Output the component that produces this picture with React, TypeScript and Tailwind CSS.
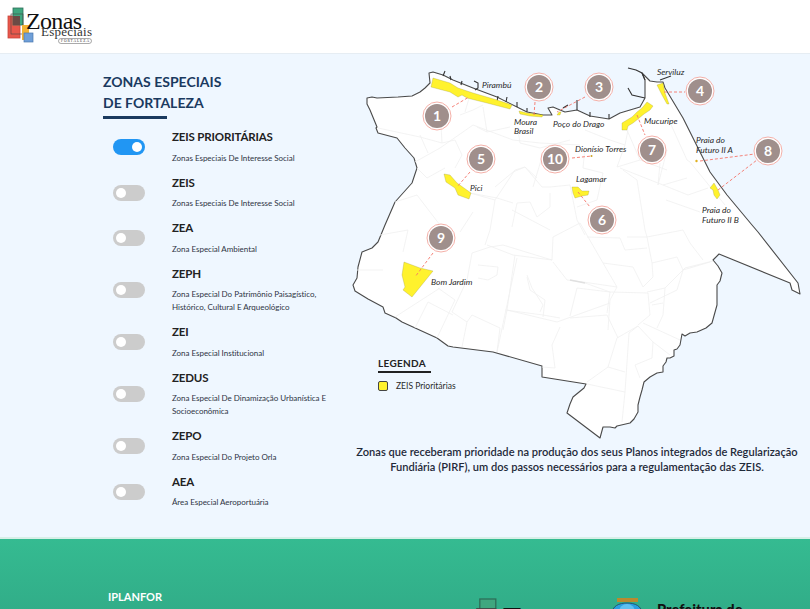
import React from "react";

const zones = [
  { t: "ZEIS PRIORITÁRIAS", d: ["Zonas Especiais De Interesse Social"], on: true },
  { t: "ZEIS", d: ["Zonas Especiais De Interesse Social"] },
  { t: "ZEA", d: ["Zona Especial Ambiental"] },
  { t: "ZEPH", d: ["Zona Especial Do Patrimônio Paisagístico,", "Histórico, Cultural E Arqueológico"] },
  { t: "ZEI", d: ["Zona Especial Institucional"] },
  { t: "ZEDUS", d: ["Zona Especial De Dinamização Urbanística E", "Socioeconômica"] },
  { t: "ZEPO", d: ["Zona Especial Do Projeto Orla"] },
  { t: "AEA", d: ["Área Especial Aeroportuária"] },
];

const outline =
  "367,98 372,97 377,98 398,97 412,96 420,92 425,88 430,83 429,73 433,72 443,75 453,80 473,88 497,97 517,107 527,112 543,115 552,115 548,108 553,107 560,110 565,112 577,110 590,116 609,119 620,113 640,107 645,98 645,80 642,73 650,81 657,82 663,82 665,88 683,118 710,172 727,195 752,225 758,232 798,283 800,294 792,290 790,283 719,254 713,260 718,266 722,273 720,281 717,285 717,305 712,323 706,328 697,332 690,333 685,336 682,334 680,345 677,349 674,350 674,356 670,358 667,358 666,362 663,366 663,372 657,373 650,377 644,382 642,390 640,397 638,405 638,412 634,419 630,423 617,426 615,428 610,427 603,427 600,438 567,413 570,404 573,397 584,388 586,384 542,377 542,366 493,352 453,347 448,346 437,338 402,322 396,318 385,313 383,307 368,299 355,291 353,285 357,278 358,267 362,252 372,248 378,242 385,225 395,202 412,183 417,168 414,158 405,148 397,138 378,133 376,128 377,127 370,110 367,104";

const jetties = [
  "474,81 478,83 478,88 475,90",
  "445,71 443,76",
  "450,76 451,80",
  "462,81 461,85",
  "498,96 497,101",
  "507,97 506,102",
  "517,102 517,107",
  "527,108 527,112",
  "577,100 577,110",
  "590,112 590,117",
  "609,114 609,119",
  "628,68 636,70 642,73 645,80",
  "628,88 632,95 645,98",
  "660,80 671,76",
  "563,108 568,105",
];

const districts = [
  "487,245 513,255 552,260", "552,260 553,237 580,223", "580,223 603,263 617,287",
  "553,262 567,280 583,282 617,287", "515,255 507,310 503,330", "507,310 557,322 610,303",
  "527,277 530,290 545,300 543,317", "603,263 633,267 643,287", "617,287 610,300 608,330",
  "647,237 652,263 653,277 643,287", "647,237 683,230 690,243 703,260", "652,263 677,257 683,270 710,262",
  "683,270 677,290 650,303", "627,237 647,237 645,230 637,180 623,170", "587,237 620,238 625,250 647,248",
  "570,185 577,220 585,235", "495,200 490,230 485,245", "515,170 495,200 470,193",
  "515,170 525,167 542,187 550,187 570,185", "550,193 550,207 537,217 530,202 517,203 512,227",
  "512,210 550,230", "542,157 533,187", "518,130 520,143 540,148 570,140", "617,167 640,160 667,170",
  "640,160 627,130", "658,185 667,150", "603,173 597,200 577,207", "378,128 420,137 442,143 455,140",
  "415,162 440,148 473,125 513,140", "420,135 428,153", "440,108 442,143", "455,140 462,155 455,168",
  "460,115 473,110 483,105", "477,127 487,132 510,127", "483,107 487,132", "513,140 540,143 580,145",
  "495,187 513,172 525,167 537,178", "470,193 497,198 513,203", "395,202 417,195 430,212 440,225",
  "417,168 427,178 445,168", "473,212 460,232", "380,235 408,230 403,252", "357,270 383,270",
  "395,317 440,288", "438,288 455,300 437,338", "428,302 453,315", "415,328 428,302",
  "472,253 467,280 452,312 467,322 462,347", "467,322 472,315 500,328 497,352",
  "472,253 490,247 503,245 552,260", "517,258 497,352", "505,310 543,315 560,318",
  "560,327 552,345 555,368 542,367", "478,265 498,267 497,275 488,280 478,278",
  "527,275 532,288 543,305 540,312", "587,384 625,392 622,422", "625,392 629,333 638,326",
  "638,326 617,338 608,367 587,382", "608,367 625,372", "638,326 653,342 670,355", "643,323 680,340",
  "653,342 652,358 635,365 640,378", "570,318 607,315 618,338", "610,292 607,313",
  "610,292 648,293 650,315 638,325", "585,283 610,292 577,288 570,316", "665,288 663,315 657,328",
  "652,305 663,303", "647,292 665,288 685,268 713,261", "668,118 687,160", "687,160 690,162 725,205",
  "620,168 663,185 687,178", "660,163 658,185", "585,130 610,140 625,145 628,130", "625,145 617,167",
  "663,185 688,195 708,188", "666,200 700,212", "470,95 465,112", "585,147 583,168 603,173",
];

const yellow = [
  "433,78 450,83 458,88 473,93 497,100 512,105 510,109 487,103 467,98 462,95 458,97 450,92 431,87",
  "519,111 527,113 543,115 542,117 530,116 520,114",
  "559,112 561,112 560,115 557,115",
  "444,174 450,175 457,183 471,193 469,199 458,195 455,188 446,182",
  "572,187 578,187 582,191 589,191 588,195 582,196 575,198 573,193",
  "622,130 622,123 632,117 637,112 642,108 647,102 653,106 650,110 644,114 638,119 633,123 628,126 627,130",
  "657,85 663,83 665,93 669,104 667,104 662,95",
  "710,188 714,183 718,190 720,195 717,199 714,195 713,190",
  "404,262 412,265 420,268 433,271 412,297 403,290 405,287 402,275",
];

const circles: [number, number, string][] = [
  [437, 116, "1"], [539, 87, "2"], [599, 87, "3"], [700, 91, "4"], [481, 159, "5"],
  [602, 220, "6"], [652, 150, "7"], [768, 151, "8"], [441, 238, "9"], [555, 159, "10"],
];

const connectors = [
  "452,107 469,97", "535,102 534,115", "585,97 570,105 557,112", "664,92 685,92", "470,172 457,187",
  "578,192 590,207", "637,115 645,135", "700,161 755,154", "718,190 757,160", "433,253 415,277", "572,158 592,156",
];

const labels: [number, number, string][] = [
  [482, 88, "Pirambú"], [514, 125, "Moura"], [514, 134, "Brasil"], [553, 127, "Poço do Drago"],
  [657, 75, "Serviluz"], [644, 124, "Mucuripe"], [696, 143, "Praia do"], [696, 153, "Futuro II A"],
  [702, 213, "Praia do"], [702, 223, "Futuro II B"], [575, 152, "Dionísio Torres"], [576, 182, "Lagamar"],
  [470, 191, "Pici"], [431, 285, "Bom Jardim"],
];

function Logo({ className }: { className: string }) {
  return (
    <svg viewBox="0 0 95 46" className={className}>
      <rect x="8" y="16" width="12" height="22" fill="#e8574b" stroke="#c9453a" strokeWidth="0.8" />
      <rect x="13" y="8" width="10" height="17" fill="#3fa77f" stroke="#2d6e58" strokeWidth="0.8" />
      <rect x="13" y="16" width="7" height="9" fill="#6b4a45" />
      <rect x="11" y="14" width="12" height="20" fill="none" stroke="#444" strokeWidth="0.6" />
      <rect x="22" y="25" width="7" height="15" fill="#f2b233" />
      <rect x="24" y="33" width="9" height="9" fill="#6f9fd8" stroke="#4a78b0" strokeWidth="0.7" />
      <text x="26" y="29" fontFamily="'Liberation Serif', serif" fontSize="24" fill="#111" textLength="56">Zonas</text>
      <text x="41" y="36" fontFamily="'Liberation Serif', serif" fontSize="13" fill="#333" textLength="51">Especiais</text>
      <rect x="58.5" y="38.5" width="33" height="5" rx="2.5" fill="#fff" stroke="#555" strokeWidth="0.5" />
      <text x="61" y="42.4" fontFamily="'Liberation Serif', serif" fontSize="3.6" fill="#333" textLength="28">FORTALEZA</text>
    </svg>
  );
}

function Toggle({ on }: { on?: boolean }) {
  return (
    <div className={`mt-[3px] flex h-4 w-8 shrink-0 items-center rounded-full px-[3px] ${on ? "justify-end bg-[#2196f3]" : "justify-start bg-[#cccccc]"}`}>
      <div className="h-[10px] w-[10px] rounded-full bg-white" />
    </div>
  );
}

function MapArt() {
  return (
    <svg viewBox="345 54 465 386" className="block h-[386px] w-[465px]">
      <polygon points={outline} fill="#ffffff" stroke="#4a4a4a" strokeWidth="1.1" strokeLinejoin="round" />
      {districts.map((p, i) => (
        <polyline key={i} points={p} fill="none" stroke="#f0f0f0" strokeWidth="0.8" />
      ))}
      <polyline points="570,280 585,283" fill="none" stroke="#e0e0e0" strokeWidth="1.5" />
      {jetties.map((p, i) => (
        <polyline key={i} points={p} fill="none" stroke="#333333" strokeWidth="1.1" />
      ))}
      {yellow.map((p, i) => (
        <polygon key={i} points={p} fill="#fff22d" stroke="#9a9440" strokeWidth="0.3" />
      ))}
      <circle cx="696.5" cy="161" r="1.2" fill="#e0b020" />
      <circle cx="591.5" cy="156" r="1" fill="#c9a020" />
      {connectors.map((p, i) => (
        <polyline key={i} points={p} fill="none" stroke="#f4756a" strokeWidth="0.9" strokeDasharray="3 2" />
      ))}
      {labels.map(([x, y, t], i) => (
        <text key={i} x={x} y={y} fontFamily="Lato, sans-serif" fontStyle="italic" fontSize="8.5" fill="#2a2a2a">{t}</text>
      ))}
      {circles.map(([x, y, t]) => (
        <g key={t}>
          <circle cx={x} cy={y} r="14" fill="#ffffff" stroke="#f3a79e" strokeWidth="0.9" />
          <circle cx={x} cy={y} r="12" fill="#a08f8c" />
          <text x={x} y={y + 5} textAnchor="middle" fontFamily="Lato, sans-serif" fontWeight="700" fontSize="14" fill="#ffffff">{t}</text>
        </g>
      ))}
    </svg>
  );
}

export default function App() {
  return (
    <div className="flex h-[609px] w-[810px] flex-col overflow-hidden bg-white font-['Lato',sans-serif]">
      <header className="relative z-10 h-[54px] shrink-0 border-b border-[#e6edf3] bg-white">
        <Logo className="h-[46px] w-[95px]" />
      </header>

      <main className="flex h-[483px] shrink-0 bg-[#eff7ff]">
        <aside className="w-[345px] shrink-0 pl-[103px] pt-[18px]">
          <h1 className="text-[14px] font-bold leading-[20.5px] text-[#1a3a5f]">
            ZONAS ESPECIAIS
            <br />
            DE FORTALEZA
          </h1>
          <div className="mt-[3px] h-[2.5px] w-[64px] bg-[#1a3a5f]" />
          <ul className="ml-[10px] mt-[8.5px] flex flex-col gap-2">
            {zones.map((z) => (
              <li key={z.t} className="flex items-center gap-[27px]">
                <Toggle on={z.on} />
                <div>
                  <div className="h-5 text-[11.5px] font-bold leading-5 tracking-[-0.15px] text-[#222222]">{z.t}</div>
                  <div className="mt-[4.5px] text-[8px] leading-[13px] tracking-[-0.03px] text-[#2e3444]">
                    {z.d.map((l) => (
                      <div key={l}>{l}</div>
                    ))}
                  </div>
                </div>
              </li>
            ))}
          </ul>
        </aside>

        <section className="relative w-[465px] shrink-0">
          <MapArt />
          <div className="absolute left-[33px] top-[302px]">
            <div className="w-[53px] border-b-2 border-[#222222] pb-[1px] text-[10px] font-bold leading-[14px] tracking-[0.3px] text-[#222222]">LEGENDA</div>
            <div className="mt-[7px] flex items-center gap-2">
              <span className="h-[10px] w-[10px] rounded-[2px] border border-[#444444] bg-[#fff22d]" />
              <span className="text-[8.5px] leading-[12px] text-[#2a2a2a]">ZEIS Prioritárias</span>
            </div>
          </div>
          <p className="absolute left-[2px] top-[390px] w-[460px] text-center text-[11.1px] font-semibold leading-[15px] text-[#1f2a3a]">
            Zonas que receberam prioridade na produção dos seus Planos integrados de Regularização
            <br />
            Fundiária (PIRF), um dos passos necessários para a regulamentação das ZEIS.
          </p>
        </section>
      </main>

      <footer className="flex h-[200px] shrink-0 border-t-2 border-[#d7efe7] bg-gradient-to-b from-[#35bb91] to-[#2b9579]">
        <div className="w-[459px] shrink-0 pl-[108px] pt-[51px] text-white">
          <div className="text-[11px] font-bold leading-[14px]">IPLANFOR</div>
          <div className="mt-[3px] text-[8.5px] leading-[12px]">Instituto de Planejamento de Fortaleza</div>
        </div>
        <Logo className="mt-[47px] h-[74px] w-[152px] shrink-0" />
        <svg viewBox="0 0 32 40" className="mt-[59px] h-[40px] w-[32px] shrink-0">
          <rect x="6" y="0" width="21" height="4" fill="#b98a2e" />
          <path d="M1 16 C1 8 8 5 16 5 C24 5 31 8 31 16 L31 40 L1 40 Z" fill="#2a9fe0" stroke="#24566e" strokeWidth="1" />
          <circle cx="16" cy="14" r="8" fill="#5fc0ee" />
        </svg>
        <div className="ml-[14px] mt-[60.5px] text-[14.7px] font-black leading-[18px] text-[#111111]">Prefeitura de</div>
      </footer>
    </div>
  );
}
